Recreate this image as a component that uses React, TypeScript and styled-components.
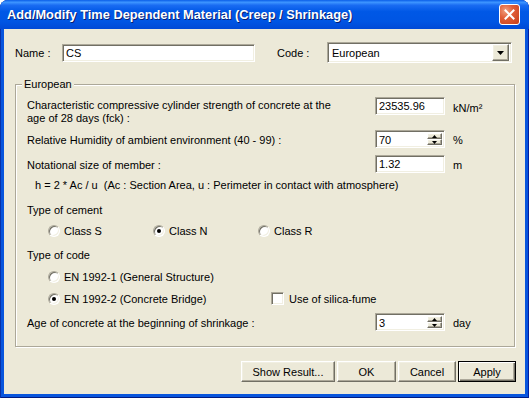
import styled, { createGlobalStyle, css } from "styled-components";

const GlobalStyle = createGlobalStyle`
  html, body {
    margin: 0;
    padding: 0;
    background: #ffffff;
  }
  body {
    font-family: "Liberation Sans", Arial, sans-serif;
    font-size: 11px;
    color: #000000;
  }
`;

const sunken = css`
  box-sizing: border-box;
  border: 1px solid;
  border-color: #aca899 #ffffff #ffffff #aca899;
  box-shadow: inset 1px 1px #716f64, inset -1px -1px #f1efe2;
  background: #ffffff;
`;

const raised = css`
  box-sizing: border-box;
  border: 1px solid;
  border-color: #ffffff #716f64 #716f64 #ffffff;
  box-shadow: inset -1px -1px #aca899, inset 1px 1px #f1efe2;
  background: #ece9d8;
`;

const Window = styled.div`
  width: 529px;
  height: 398px;
  display: flex;
  flex-direction: column;
  box-sizing: border-box;
  background: #0855dd;
  border-radius: 8px 8px 0 0;
  box-shadow: inset 1px 0 #0831a9, inset -1px 0 #001ea0, inset 0 -1px #001a80;
  overflow: hidden;
`;

const TitleBar = styled.div`
  height: 29px;
  flex: none;
  display: flex;
  align-items: center;
  padding: 0 9px 0 7px;
  background: linear-gradient(
    to bottom,
    #0a5ee8 0%,
    #3d95ff 8%,
    #1a6cf2 18%,
    #0058e6 40%,
    #0055e3 75%,
    #0049d6 100%
  );
`;

const TitleText = styled.div`
  flex: 1;
  font-family: "Liberation Sans", Arial, sans-serif;
  font-weight: bold;
  font-size: 12.8px;
  color: #ffffff;
  text-shadow: 1px 1px #0a1e6e;
  white-space: nowrap;
`;

const CloseButton = styled.div`
  width: 21px;
  height: 21px;
  box-sizing: border-box;
  border: 1px solid #ffffff;
  border-radius: 3px;
  background: radial-gradient(circle at 30% 30%, #f0a080 0%, #e15e38 40%, #c63d19 100%);
  display: grid;
  place-items: center;
`;

const Body = styled.div`
  flex: 1;
  margin: 0 4px 4px;
  padding: 13px 9px 0 11px;
  background: #ece9d8;
  display: flex;
  flex-direction: column;
`;

const TopRow = styled.div`
  display: flex;
  align-items: center;
  height: 21px;
`;

const FieldLabel = styled.div<{ $w: number; $ml?: number }>`
  width: ${(p) => p.$w}px;
  margin-left: ${(p) => p.$ml ?? 0}px;
  flex: none;
  white-space: nowrap;
`;

const TextBox = styled.div<{ $w: number }>`
  ${sunken};
  width: ${(p) => p.$w}px;
  height: 18px;
  flex: none;
  padding: 0 3px;
  line-height: 16px;
  white-space: nowrap;
`;

const Combo = styled.div`
  ${sunken};
  width: 185px;
  height: 21px;
  display: flex;
  align-items: center;
  padding: 2px 2px 2px 4px;
`;

const ComboText = styled.span`
  flex: 1;
`;

const DropButton = styled.div`
  ${raised};
  width: 17px;
  height: 17px;
  display: grid;
  place-items: center;
`;

const Group = styled.fieldset`
  box-sizing: border-box;
  width: 500px;
  height: 269px;
  margin: 15px 0 0;
  padding: 7px 11px 0;
  border: 1px solid #aca899;
  box-shadow: 1px 1px #ffffff, inset 1px 1px #ffffff;
  border-radius: 0;
  min-inline-size: 0;
  display: flex;
  flex-direction: column;
`;

const Legend = styled.legend`
  padding: 0 2px;
  margin-left: -5px;
  line-height: 12px;
  background: #ece9d8;
`;

const Row = styled.div<{ $mt?: number; $h: number }>`
  display: flex;
  align-items: flex-start;
  margin-top: ${(p) => p.$mt ?? 0}px;
  height: ${(p) => p.$h}px;
`;

const RowLabel = styled.div<{ $pt?: number }>`
  width: 348px;
  flex: none;
  padding-top: ${(p) => p.$pt ?? 0}px;
  line-height: 13px;
`;

const Unit = styled.div<{ $pt?: number }>`
  margin-left: 8px;
  padding-top: ${(p) => p.$pt ?? 4}px;
  line-height: 13px;
  white-space: nowrap;
`;

const TextLine = styled.div<{ $mt: number; $ml?: number }>`
  margin-top: ${(p) => p.$mt}px;
  margin-left: ${(p) => p.$ml ?? 0}px;
  line-height: 13px;
  height: 13px;
  white-space: nowrap;
`;

const Spin = styled.div`
  ${sunken};
  width: 70px;
  height: 18px;
  display: flex;
  padding: 2px 2px 2px 3px;
`;

const SpinValue = styled.div`
  flex: 1;
  line-height: 14px;
`;

const SpinButtons = styled.div`
  width: 15px;
  display: flex;
  flex-direction: column;
`;

const SpinButton = styled.div`
  ${raised};
  flex: 1;
  display: grid;
  place-items: center;
`;

const OptionRow = styled.div<{ $mt: number }>`
  display: flex;
  align-items: center;
  height: 13px;
  margin-top: ${(p) => p.$mt}px;
  padding-left: 21px;
`;

const Option = styled.label<{ $w: number }>`
  display: flex;
  align-items: center;
  width: ${(p) => p.$w}px;
  flex: none;
  gap: 4px;
  white-space: nowrap;
`;

const Radio = styled.span<{ $on?: boolean }>`
  width: 12px;
  height: 12px;
  box-sizing: border-box;
  border-radius: 50%;
  border: 1px solid;
  border-color: #aca899 #ffffff #ffffff #aca899;
  box-shadow: inset 1px 1px #716f64, inset -1px -1px #f1efe2;
  background: #ffffff;
  display: grid;
  place-items: center;
  flex: none;

  &::after {
    content: "";
    width: 4px;
    height: 4px;
    border-radius: 50%;
    background: ${(p) => (p.$on ? "#000000" : "transparent")};
  }
`;

const CheckBox = styled.span`
  width: 13px;
  height: 13px;
  flex: none;
  ${sunken};
  margin-right: 1px;
`;

const ButtonRow = styled.div`
  display: flex;
  justify-content: flex-end;
  gap: 2px;
  margin-top: 14px;
`;

const Button = styled.div<{ $w: number; $default?: boolean }>`
  ${raised};
  width: ${(p) => p.$w}px;
  height: 21px;
  display: flex;
  align-items: center;
  justify-content: center;
  ${(p) =>
    p.$default &&
    css`
      border: 1px solid #000000;
      box-shadow: inset 1px 1px #ffffff, inset -1px -1px #716f64, inset -2px -2px #aca899;
    `}
`;

const Arrow = ({ up, size = 3 }: { up?: boolean; size?: number }) => (
  <svg width={size * 2 + 1} height={size + 1} viewBox={`0 0 ${size * 2 + 1} ${size + 1}`}>
    <polygon
      points={up ? `0,${size + 1} ${size * 2 + 1},${size + 1} ${size + 0.5},0` : `0,0 ${size * 2 + 1},0 ${size + 0.5},${size + 1}`}
      fill="#000"
    />
  </svg>
);

const SpinBox = ({ value }: { value: string }) => (
  <Spin>
    <SpinValue>{value}</SpinValue>
    <SpinButtons>
      <SpinButton>
        <Arrow up size={2} />
      </SpinButton>
      <SpinButton>
        <Arrow size={2} />
      </SpinButton>
    </SpinButtons>
  </Spin>
);

export default function App() {
  return (
    <>
      <GlobalStyle />
      <Window>
        <TitleBar>
          <TitleText>Add/Modify Time Dependent Material (Creep / Shrinkage)</TitleText>
          <CloseButton>
            <svg width="11" height="11" viewBox="0 0 11 11">
              <path d="M1.5 1.5 L9.5 9.5 M9.5 1.5 L1.5 9.5" stroke="#fff" strokeWidth="2" strokeLinecap="square" />
            </svg>
          </CloseButton>
        </TitleBar>
        <Body>
          <TopRow>
            <FieldLabel $w={47}>Name :</FieldLabel>
            <TextBox $w={193}>CS</TextBox>
            <FieldLabel $w={50} $ml={22}>Code :</FieldLabel>
            <Combo>
              <ComboText>European</ComboText>
              <DropButton>
                <Arrow size={3} />
              </DropButton>
            </Combo>
          </TopRow>

          <Group>
            <Legend>European</Legend>
            <Row $h={28}>
              <RowLabel $pt={2}>
                Characteristic compressive cylinder strength of concrete at the
                <br />
                age of 28 days (fck) :
              </RowLabel>
              <TextBox $w={70}>23535.96</TextBox>
              <Unit $pt={5}>kN/m²</Unit>
            </Row>
            <Row $mt={5} $h={18}>
              <RowLabel $pt={4}>Relative Humidity of ambient environment (40 - 99) :</RowLabel>
              <SpinBox value="70" />
              <Unit>%</Unit>
            </Row>
            <Row $mt={7} $h={18}>
              <RowLabel $pt={4}>Notational size of member :</RowLabel>
              <TextBox $w={70}>1.32</TextBox>
              <Unit>m</Unit>
            </Row>
            <TextLine $mt={6} $ml={8}>
              h = 2 * Ac / u &nbsp;(Ac : Section Area, u : Perimeter in contact with atmosphere)
            </TextLine>

            <TextLine $mt={12}>Type of cement</TextLine>
            <OptionRow $mt={7}>
              <Option $w={105}>
                <Radio />
                Class S
              </Option>
              <Option $w={105}>
                <Radio $on />
                Class N
              </Option>
              <Option $w={105}>
                <Radio />
                Class R
              </Option>
            </OptionRow>

            <TextLine $mt={12}>Type of code</TextLine>
            <OptionRow $mt={8}>
              <Option $w={223}>
                <Radio />
                EN 1992-1 (General Structure)
              </Option>
            </OptionRow>
            <OptionRow $mt={9}>
              <Option $w={223}>
                <Radio $on />
                EN 1992-2 (Concrete Bridge)
              </Option>
              <Option $w={150}>
                <CheckBox />
                Use of silica-fume
              </Option>
            </OptionRow>

            <Row $mt={8} $h={18}>
              <RowLabel $pt={4}>Age of concrete at the beginning of shrinkage :</RowLabel>
              <SpinBox value="3" />
              <Unit>day</Unit>
            </Row>
          </Group>

          <ButtonRow>
            <Button $w={94}>Show Result...</Button>
            <Button $w={59}>OK</Button>
            <Button $w={58}>Cancel</Button>
            <Button $w={58} $default>
              Apply
            </Button>
          </ButtonRow>
        </Body>
      </Window>
    </>
  );
}
